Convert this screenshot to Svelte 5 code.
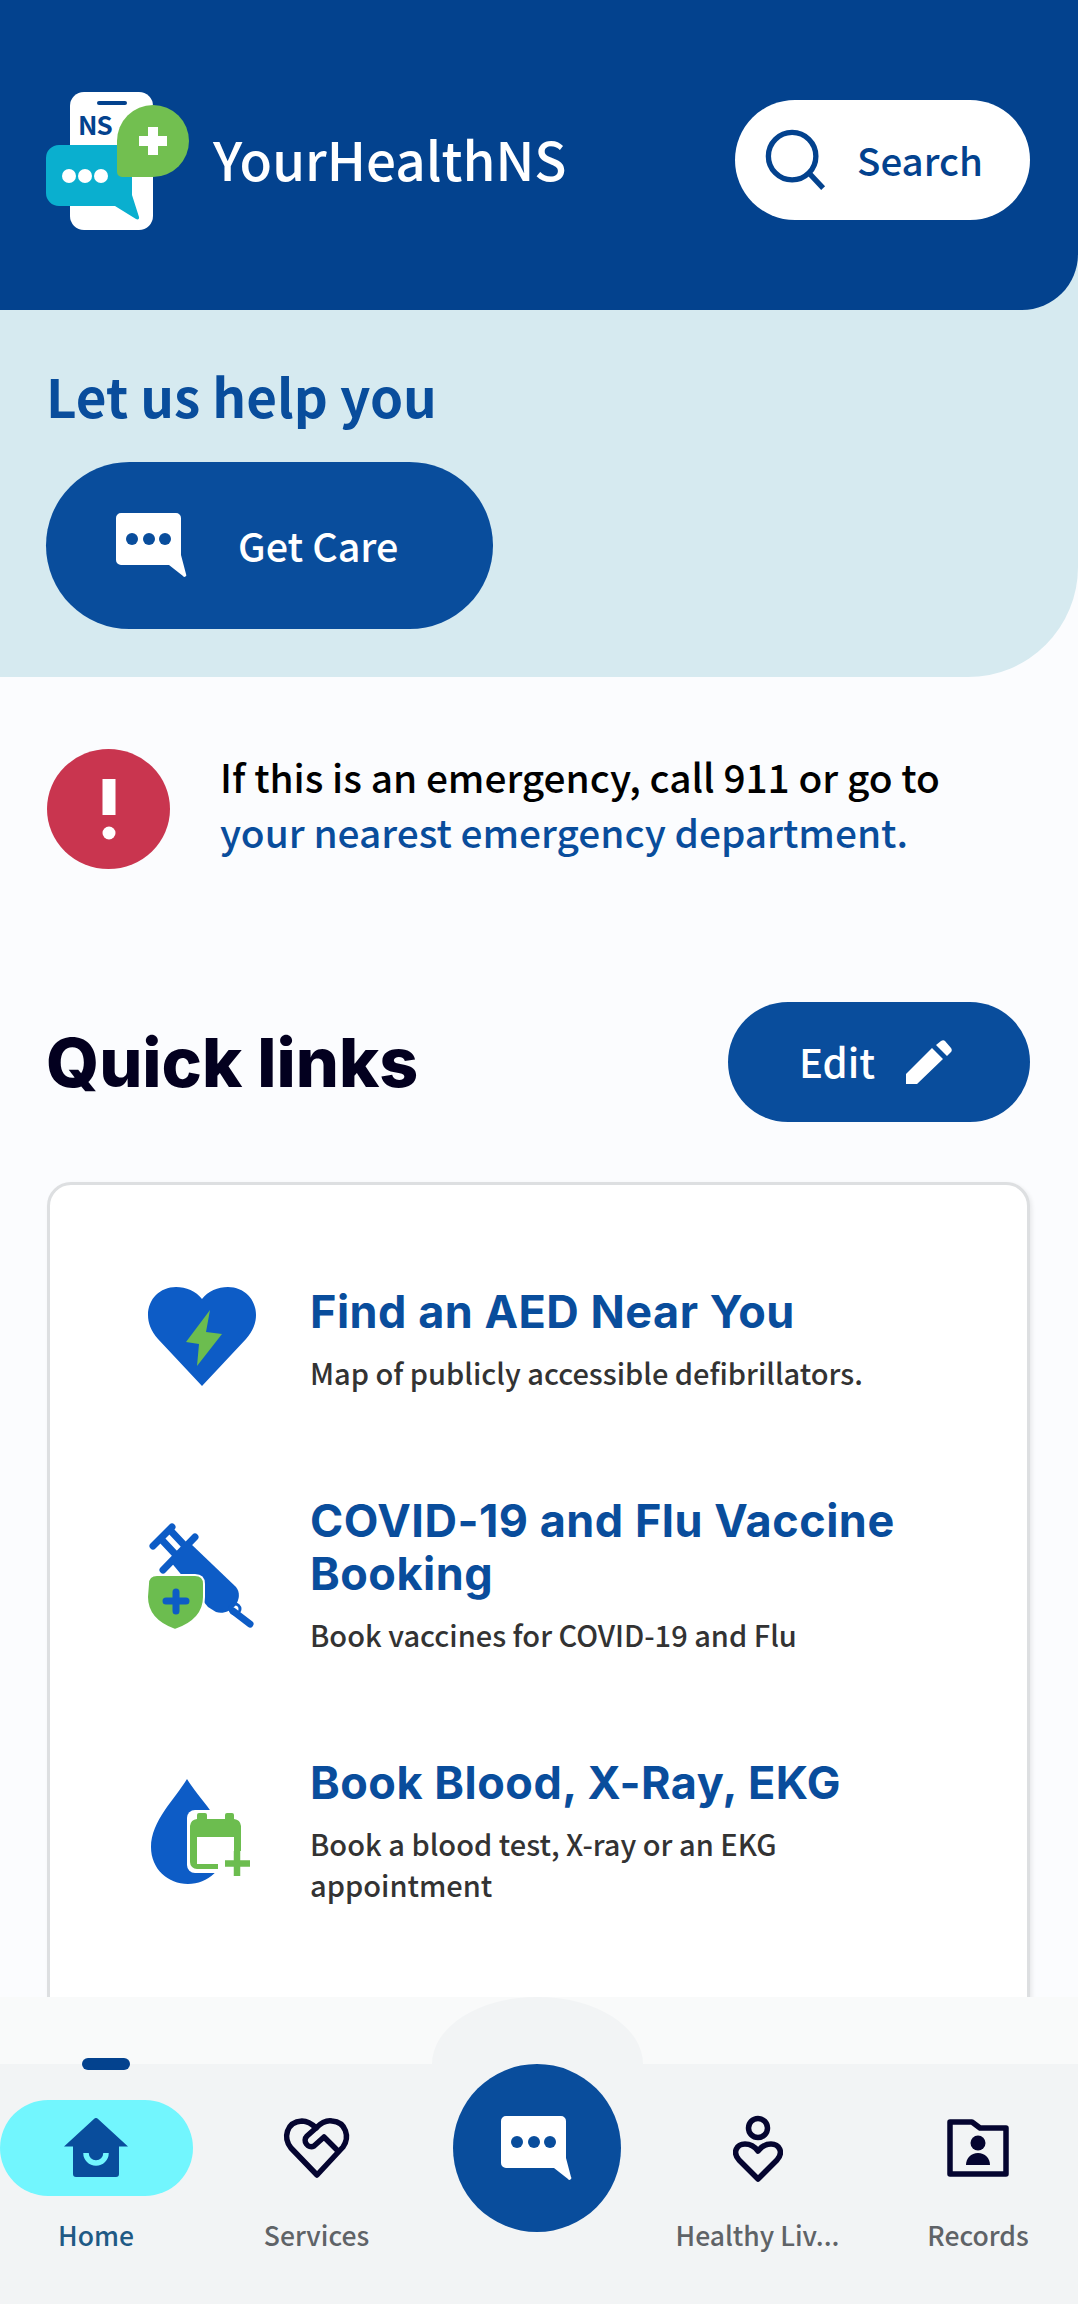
<script lang="ts">
	const links = [
		{ title: 'Find an AED Near You', sub: 'Map of publicly accessible defibrillators.', icon: 'aed' },
		{ title: 'COVID-19 and Flu Vaccine Booking', sub: 'Book vaccines for COVID-19 and Flu', icon: 'vaccine' },
		{ title: 'Book Blood, X-Ray, EKG', sub: 'Book a blood test, X-ray or an EKG appointment', icon: 'blood' }
	];
</script>

{#snippet chatIcon()}
	<svg class="chat-icon" viewBox="0 0 72 65" aria-hidden="true">
		<path fill="#fff" d="M5 0H60a5 5 0 0 1 5 5V42l5 19a1.800 1.800 0 0 1-3 2L53 52H5a5 5 0 0 1-5-5V5a5 5 0 0 1 5-5Z" />
		<circle cx="16" cy="26" r="6" fill="#094d9c" />
		<circle cx="33" cy="26" r="6" fill="#094d9c" />
		<circle cx="49" cy="26" r="6" fill="#094d9c" />
	</svg>
{/snippet}

<div class="app">
	<main class="main">
		<div class="top">
			<header class="header">
				<div class="brand">
					<svg class="logo" viewBox="0 0 170 160" aria-hidden="true">
						<rect x="40" y="12" width="83" height="138" rx="14" fill="#fff" />
						<rect x="67" y="21" width="30" height="4" rx="2" fill="#03428e" />
						<text x="48" y="55" class="logo-ns">NS</text>
						<path fill="#0aafcf" d="M29 65H92a10 10 0 0 1 10 10V115l7 22c.5 2-1 3-3 2L85 126H29A13 13 0 0 1 16 113V78A13 13 0 0 1 29 65Z" />
						<circle cx="39" cy="96" r="7" fill="#fff" />
						<circle cx="55" cy="96" r="7" fill="#fff" />
						<circle cx="71" cy="96" r="7" fill="#fff" />
						<path fill="#72bf50" d="M87 61A36 36 0 1 1 123 97H92a5 5 0 0 1-5-5Z" />
						<path fill="#fff" d="M118 47h10v9h9v10h-9v9h-10v-9h-9V56h9Z" />
					</svg>
					<span class="brand-name">YourHealthNS</span>
				</div>
				<button class="search">
					<svg class="search-icon" viewBox="0 0 64 64" aria-hidden="true">
						<circle cx="28" cy="28" r="24.500" fill="none" stroke="#03428e" stroke-width="5.500" />
						<path d="M45 45L60 61" stroke="#03428e" stroke-width="5.500" />
					</svg>
					<span>Search</span>
				</button>
			</header>
			<section class="help">
				<h2>Let us help you</h2>
				<button class="get-care">
					{@render chatIcon()}
					<span>Get Care</span>
				</button>
			</section>
		</div>

		<section class="emergency">
			<div class="alert-dot">
				<svg viewBox="0 0 14 61" width="14" height="61" aria-hidden="true">
					<rect x="0.500" y="0" width="13" height="36" fill="#fff" />
					<circle cx="7" cy="54" r="6.500" fill="#fff" />
				</svg>
			</div>
			<p>If this is an emergency, call 911 or go to <span>your nearest emergency department.</span></p>
		</section>

		<section class="quick">
			<div class="quick-head">
				<h2>Quick links</h2>
				<button class="edit">
					<span>Edit</span>
					<svg viewBox="0 0 48 48" width="48" height="48" aria-hidden="true">
						<path fill="#fff" d="M1 36L27 10l11 11L12 46H1ZM31 7l5-4c1.500-1 3-1 4 0l6 7c1 1.500 1 3 0 4l-4 4Z" />
					</svg>
				</button>
			</div>

			<div class="card">
				{#each links as link}
					<a class="row" href="#top">
						{#if link.icon === 'aed'}
							<svg class="row-icon" viewBox="0 50 200 100" aria-hidden="true">
								<path fill="#0d5cc6" d="M102 147L58 100C51 92 48 84 48 76C48 60 60 48 76 48C86 48 96 52 102 60C108 52 118 48 128 48C144 48 156 60 156 76C156 84 153 92 146 100Z" />
								<path fill="#6cbd4f" d="M110 71L86 103L99 105L97 127L122 95L106 93Z" />
							</svg>
						{:else if link.icon === 'vaccine'}
							<svg class="row-icon" viewBox="0 26 200 100" aria-hidden="true">
								<g stroke="#0d5cc6" stroke-width="7" stroke-linecap="round" fill="none">
									<path d="M53 47L72 28" />
									<path d="M61 40L76 56" />
									<path d="M70 31L85 47" />
									<path d="M63 71L95 38" />
									<path d="M133 112L150 125" />
								</g>
								<path fill="#0d5cc6" d="M70 62L90 44L136 88C140 93 140 100 135 107C130 113 122 115 116 113L108 108Z" />
								<circle cx="135" cy="110" r="5" fill="none" stroke="#0d5cc6" stroke-width="3" />
								<path fill="#6cbd4f" stroke="#fff" stroke-width="2" d="M48 85Q48 76 57 76H95Q104 76 104 85V98Q104 121 75 131Q47 121 47 98Z" />
								<path d="M76 93V112M66 102H86" stroke="#0d5cc6" stroke-width="7" stroke-linecap="round" />
							</svg>
						{:else}
							<svg class="row-icon" viewBox="0 32 200 100" aria-hidden="true">
								<path fill="#0d5cc6" d="M87 30C75 50 51 72 51 98C51 120 68 135 88 135C108 135 125 120 125 98C125 72 99 50 87 30Z" />
								<rect x="87" y="61" width="56" height="63" rx="8" fill="#fff" />
								<path fill="#6cbd4f" d="M97 70V66a2 2 0 0 1 2-2h6a2 2 0 0 1 2 2v4h18v-4a2 2 0 0 1 2-2h5a2 2 0 0 1 2 2v4a8 8 0 0 1 7 7v25h-7V88H97v27h21v5H97a7 7 0 0 1-7-7V77a8 8 0 0 1 7-7Z" />
								<path d="M137 102V127M125 114.500H150" stroke="#6cbd4f" stroke-width="6.500" />
							</svg>
						{/if}
						<div class="row-text">
							<h3>{link.title}</h3>
							<p>{link.sub}</p>
						</div>
					</a>
				{/each}
			</div>
		</section>
	</main>

	<nav class="nav">
		<div class="strip"><div class="bump"></div></div>
		<div class="tabs">
			<a class="tab active" href="#top">
				<span class="marker"></span>
				<span class="tab-icon pill">
					<svg viewBox="0 0 66 60" width="66" height="60" aria-hidden="true">
						<path fill="#094d9c" d="M33 0a2 2 0 0 1 1.500.5L65 28.500H56V56a3 3 0 0 1-3 3H13a3 3 0 0 1-3-3V28.500H1L31.500.5A2 2 0 0 1 33 0Z" />
						<path d="M23 35a10 10 0 0 0 20 0" fill="none" stroke="#72f6fe" stroke-width="5.500" />
					</svg>
				</span>
				<span class="tab-label">Home</span>
			</a>
			<a class="tab" href="#top">
				<span class="tab-icon">
					<svg viewBox="0 0 74 70" width="74" height="70" aria-hidden="true">
						<g fill="none" stroke="#050530" stroke-width="5.500" stroke-linejoin="round" stroke-linecap="round">
							<path d="M37 62L11 35C3 25 6 9 22 8C28 8 32 11 36 15C41 10 46 7 52 8C66 9 70 24 63 34Z" />
							<path d="M36 15L27 23C22 28 28 36 34 33L44 24L58 38" />
						</g>
					</svg>
				</span>
				<span class="tab-label">Services</span>
			</a>
			<a class="tab center" href="#top" aria-label="Get Care">
				<span class="fab">{@render chatIcon()}</span>
			</a>
			<a class="tab" href="#top">
				<span class="tab-icon">
					<svg viewBox="0 0 50 70" width="50" height="70" aria-hidden="true">
						<g fill="none" stroke="#050530" stroke-width="5.500" stroke-linejoin="round">
							<circle cx="25" cy="15" r="9.500" />
							<path d="M25 66L6 47C-1 39 4 31 12 31C18 31 22 34 25 38C28 34 32 31 38 31C46 31 51 39 44 47Z" />
						</g>
					</svg>
				</span>
				<span class="tab-label">Healthy Liv...</span>
			</a>
			<a class="tab" href="#top">
				<span class="tab-icon">
					<svg viewBox="0 0 62 58" width="62" height="58" aria-hidden="true">
						<path fill="none" stroke="#050530" stroke-width="5.500" stroke-linejoin="round" d="M3 3H25L33 9H59V55H3Z" />
						<circle cx="31" cy="24" r="7.500" fill="#050530" />
						<path d="M19 46C19 39 24 34 31 34C38 34 43 39 43 46Z" fill="#050530" />
					</svg>
				</span>
				<span class="tab-label">Records</span>
			</a>
		</div>
	</nav>
</div>

<style>
	:global(body) {
		margin: 0;
		background: #fbfcfe;
	}

	.app {
		--sans: 'Noto Sans CJK SC', 'Noto Sans', sans-serif;
		--head: Inter, 'Open Sans', sans-serif;
		--blue: #094d9c;
		--navy: #03428e;
		display: flex;
		flex-direction: column;
		width: 1078px;
		height: 2304px;
		overflow: hidden;
		font-family: var(--sans);
	}

	.main {
		flex: 1;
		min-height: 0;
		overflow: hidden;
	}

	button {
		border: none;
		font-family: inherit;
		display: flex;
		align-items: center;
		padding: 0;
	}

	.top {
		background: #d6eaf0;
		border-bottom-right-radius: 110px;
	}

	.header {
		display: flex;
		align-items: center;
		justify-content: space-between;
		box-sizing: border-box;
		height: 310px;
		padding: 10px 48px 0 30px;
		background: var(--navy);
		border-bottom-right-radius: 56px;
	}

	.brand {
		display: flex;
		align-items: center;
		gap: 13px;
	}

	.logo {
		width: 170px;
		height: 160px;
	}

	.logo-ns {
		font-family: var(--sans);
		font-weight: 700;
		font-size: 26px;
		letter-spacing: -1px;
		fill: #03428e;
	}

	.brand-name {
		color: #fff;
		font-size: 53px;
		font-weight: 500;
		line-height: 66px;
		margin-top: -4px;
	}

	.search {
		width: 295px;
		height: 120px;
		border-radius: 60px;
		background: #fff;
		color: var(--navy);
		font-size: 38.500px;
		font-weight: 500;
		padding-left: 30px;
		gap: 30px;
	}

	.search span {
		margin-top: -3px;
	}

	.search-icon {
		width: 62px;
		height: 62px;
	}

	.help {
		padding: 50px 0 48px 46px;
	}

	.help h2 {
		margin: 0 0 32px;
		color: var(--blue);
		font-size: 53px;
		font-weight: 700;
		line-height: 70px;
	}

	.get-care {
		width: 447px;
		height: 167px;
		border-radius: 84px;
		background: var(--blue);
		color: #fff;
		font-size: 39.500px;
		font-weight: 500;
		padding-left: 70px;
		gap: 50px;
	}

	.get-care span {
		margin-top: -3px;
	}

	.chat-icon {
		width: 72px;
		height: 65px;
	}

	.emergency {
		display: flex;
		align-items: center;
		gap: 50px;
		padding: 72px 47px 0;
	}

	.alert-dot {
		flex: none;
		display: flex;
		align-items: center;
		justify-content: center;
		width: 123px;
		height: 120px;
		border-radius: 50%;
		background: #c9354f;
	}

	.emergency p {
		margin: -10px 0 0;
		font-size: 38.800px;
		font-weight: 500;
		line-height: 55px;
		color: #000;
	}

	.emergency span {
		color: var(--blue);
	}

	.quick {
		padding: 133px 47px 0;
	}

	.quick-head {
		display: flex;
		align-items: center;
		justify-content: space-between;
		margin-bottom: 60px;
		padding-right: 1px;
	}

	.quick-head h2 {
		margin: 0 0 0 -1px;
		font-family: var(--head);
		font-size: 68px;
		font-weight: 800;
		color: #03001f;
	}

	.edit {
		justify-content: center;
		width: 302px;
		height: 120px;
		border-radius: 60px;
		background: var(--blue);
		color: #fff;
		font-size: 40px;
		font-weight: 500;
		gap: 30px;
		padding-right: 6px;
	}

	.edit span {
		margin-top: -3px;
	}

	.card {
		display: flex;
		flex-direction: column;
		gap: 101px;
		box-sizing: border-box;
		width: 983px;
		padding: 100px 60px 200px 50px;
		background: #fff;
		border: 3px solid #dddfe1;
		border-radius: 24px;
		box-shadow: 2px 2px 4px rgba(0, 0, 0, 0.08);
	}

	.row {
		display: flex;
		align-items: center;
		gap: 10px;
		text-decoration: none;
	}

	.row-icon {
		flex: none;
		width: 200px;
		height: 100px;
		overflow: visible;
	}

	.row-text {
		width: 610px;
	}

	.row-text h3 {
		margin: 0 0 14px;
		font-family: var(--head);
		font-size: 45px;
		font-weight: 700;
		letter-spacing: 0.5px;
		line-height: 53px;
		color: var(--blue);
	}

	.row-text p {
		margin: 0;
		font-size: 29px;
		font-weight: 500;
		line-height: 41px;
		color: #333;
	}

	.nav {
		flex: none;
		position: relative;
	}

	.strip {
		position: relative;
		height: 67px;
		background: #f9fafa;
	}

	.bump {
		position: absolute;
		left: 432px;
		bottom: 0;
		width: 211px;
		height: 67px;
		background: #f2f4f5;
		border-radius: 105px 105px 0 0 / 67px 67px 0 0;
	}

	.tabs {
		display: flex;
		justify-content: space-between;
		box-sizing: border-box;
		height: 240px;
		padding: 36px 4px 0 0;
		background: #f2f4f5;
	}

	.tab {
		position: relative;
		display: flex;
		flex-direction: column;
		align-items: center;
		width: 192px;
		text-decoration: none;
	}

	.tab.center {
		margin-top: -36px;
	}

	.tab-icon {
		display: flex;
		align-items: center;
		justify-content: center;
		width: 193px;
		height: 96px;
		flex: none;
	}

	.pill {
		background: #72f6fe;
		border-radius: 48px;
	}

	.marker {
		position: absolute;
		left: 82px;
		top: -42px;
		width: 48px;
		height: 12px;
		border-radius: 6px;
		background: var(--navy);
	}

	.tab-label {
		margin-top: 21px;
		font-size: 26.500px;
		font-weight: 500;
		line-height: 36px;
		color: #5f6367;
		white-space: nowrap;
	}

	.tab.active .tab-label {
		color: #1f5a85;
	}

	.fab {
		display: flex;
		align-items: center;
		justify-content: center;
		width: 168px;
		height: 168px;
		border-radius: 50%;
		background: var(--blue);
	}
</style>
